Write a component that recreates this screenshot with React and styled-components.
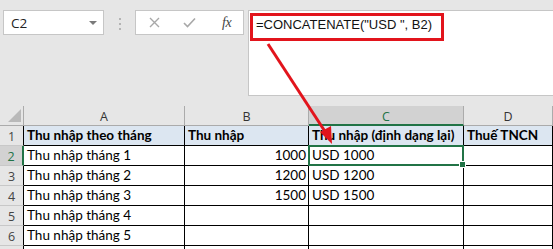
import React from 'react';
import styled, { createGlobalStyle } from 'styled-components';

const GlobalStyle = createGlobalStyle`
  html, body {
    margin: 0;
    padding: 0;
    background: #e6e6e6;
  }
  body {
    font-family: 'Lato', 'Liberation Sans', sans-serif;
  }
`;

const Page = styled.div`
  position: relative;
  width: 553px;
  height: 249px;
  overflow: hidden;
  background: #e6e6e6;
`;

const TopBar = styled.div`
  display: flex;
  align-items: flex-start;
  height: 96px;
  padding: 10px 0 0 3px;
  box-sizing: border-box;
`;

const NameBox = styled.div`
  display: flex;
  align-items: center;
  justify-content: space-between;
  width: 101px;
  height: 25px;
  box-sizing: border-box;
  padding: 0 6px 0 7px;
  background: #fff;
  border: 1px solid #c6c6c6;
  font-family: 'Open Sans', 'Liberation Sans', sans-serif;
  font-size: 13.5px;
  color: #222;
`;

const Caret = styled.span`
  width: 0;
  height: 0;
  border-left: 4px solid transparent;
  border-right: 4px solid transparent;
  border-top: 4px solid #7a7a7a;
  margin-top: 1px;
`;

const Grip = styled.div`
  display: flex;
  flex-direction: column;
  align-items: center;
  gap: 3px;
  width: 31px;
  padding-top: 8px;
`;

const Dot = styled.span`
  width: 2px;
  height: 2px;
  background: #b4b4b4;
`;

const FxBox = styled.div`
  display: flex;
  align-items: center;
  width: 109px;
  height: 25px;
  box-sizing: border-box;
  padding: 0 0 0 13px;
  gap: 23px;
  background: #fff;
  border: 1px solid #c6c6c6;
`;

const FxLabel = styled.span`
  font-family: 'Liberation Serif', serif;
  font-style: italic;
  font-size: 14px;
  color: #444;
  letter-spacing: -0.5px;
  margin-left: 3px;
`;

const FormulaBar = styled.div`
  flex: 1;
  height: 86px;
  margin-left: 4px;
  box-sizing: border-box;
  padding: 6px 0 0 7px;
  background: #fff;
  border: 1px solid #c6c6c6;
  border-right: none;
  font-family: 'Liberation Sans', sans-serif;
  font-size: 13px;
  color: #111;
  white-space: pre;
`;

const Sheet = styled.div`
  display: grid;
  grid-template-columns: 24px 161px 124px 155px 1fr;
  grid-auto-rows: 20px;
  margin-top: 10px;
`;

const Corner = styled.div`
  display: flex;
  align-items: flex-end;
  justify-content: flex-end;
  padding: 0 2px 3px 0;
  box-sizing: border-box;
  background: #e6e6e6;
  border-right: 1px solid #ababab;
  border-bottom: 1px solid #ababab;
`;

const CornerMark = styled.span`
  width: 0;
  height: 0;
  border-left: 13px solid transparent;
  border-bottom: 13px solid #b9b9b9;
`;

const ColHead = styled.div`
  display: flex;
  align-items: center;
  justify-content: center;
  box-sizing: border-box;
  background: ${(p) => (p.$active ? '#d2d2d2' : '#e6e6e6')};
  color: ${(p) => (p.$active ? '#217346' : '#333')};
  border-right: 1px solid #ababab;
  border-bottom: ${(p) => (p.$active ? '2px solid #217346' : '1px solid #ababab')};
  font-family: 'Open Sans', 'Liberation Sans', sans-serif;
  font-size: 12.5px;
  padding-top: 2px;
`;

const RowHead = styled.div`
  display: flex;
  align-items: center;
  justify-content: center;
  box-sizing: border-box;
  background: ${(p) => (p.$active ? '#d2d2d2' : '#e6e6e6')};
  color: ${(p) => (p.$active ? '#217346' : '#444')};
  border-right: ${(p) => (p.$active ? '2px solid #217346' : '1px solid #000')};
  border-bottom: 1px solid #c8c8c8;
  font-family: 'Open Sans', 'Liberation Sans', sans-serif;
  font-size: 12.5px;
  padding-top: 1px;
`;

const Cell = styled.div`
  position: relative;
  display: flex;
  align-items: flex-end;
  justify-content: ${(p) => (p.$right ? 'flex-end' : 'flex-start')};
  box-sizing: border-box;
  padding: 0 2px 1px 3px;
  background: ${(p) => (p.$head ? '#dce6f1' : '#fff')};
  border-right: 1px solid #000;
  border-bottom: 1px solid #000;
  font-size: 13.5px;
  font-weight: ${(p) => (p.$head ? 700 : 400)};
  color: #000;
  white-space: nowrap;
  line-height: 18px;
  z-index: ${(p) => (p.$selected ? 2 : 'auto')};

  ${(p) =>
    p.$selected &&
    `
    &::after {
      content: '';
      position: absolute;
      top: -1px;
      left: -1px;
      right: -1px;
      bottom: -1px;
      border: 2px solid #217346;
    }
    &::before {
      content: '';
      position: absolute;
      right: -3px;
      bottom: -3px;
      width: 5px;
      height: 5px;
      background: #217346;
      border: 1px solid #fff;
      z-index: 3;
    }
  `}
`;

const RedBox = styled.div`
  position: absolute;
  left: 250px;
  top: 13px;
  width: 194px;
  height: 28px;
  box-sizing: border-box;
  border: 3px solid #e2141c;
  pointer-events: none;
`;

const Arrow = styled.svg`
  position: absolute;
  left: 0;
  top: 0;
  pointer-events: none;
  z-index: 5;
`;

const rows = [
  { n: 1, a: 'Thu nhập theo tháng', b: 'Thu nhập', c: 'Thu nhập (định dạng lại)', d: 'Thuế TNCN', head: true },
  { n: 2, a: 'Thu nhập tháng 1', b: '1000', c: 'USD 1000' },
  { n: 3, a: 'Thu nhập tháng 2', b: '1200', c: 'USD 1200' },
  { n: 4, a: 'Thu nhập tháng 3', b: '1500', c: 'USD 1500' },
  { n: 5, a: 'Thu nhập tháng 4', b: '', c: '' },
  { n: 6, a: 'Thu nhập tháng 5', b: '', c: '' },
  { n: 7, a: '', b: '', c: '', hideNum: true },
];

const App = () => {
  return (
    <Page>
      <GlobalStyle />
      <TopBar>
        <NameBox>
          <span>C2</span>
          <Caret />
        </NameBox>
        <Grip>
          <Dot />
          <Dot />
          <Dot />
        </Grip>
        <FxBox>
          <svg width="11" height="11" viewBox="0 0 11 11">
            <path d="M1 1L10 10M10 1L1 10" stroke="#a8a8a8" strokeWidth="1.4" />
          </svg>
          <svg width="13" height="11" viewBox="0 0 13 11">
            <path d="M1 6L4.5 9.5L12 1.5" stroke="#a8a8a8" strokeWidth="1.6" fill="none" />
          </svg>
          <FxLabel>fx</FxLabel>
        </FxBox>
        <FormulaBar>=CONCATENATE("USD ", B2)</FormulaBar>
      </TopBar>

      <Sheet>
        <Corner>
          <CornerMark />
        </Corner>
        <ColHead>A</ColHead>
        <ColHead>B</ColHead>
        <ColHead $active>C</ColHead>
        <ColHead>D</ColHead>

        {rows.map((r) => (
          <React.Fragment key={r.n}>
            <RowHead $active={r.n === 2}>{r.hideNum ? '' : r.n}</RowHead>
            <Cell $head={r.head}>{r.a}</Cell>
            <Cell $head={r.head} $right={!r.head}>{r.b}</Cell>
            <Cell $head={r.head} $selected={r.n === 2}>{r.c}</Cell>
            <Cell $head={r.head}>{r.d || ''}</Cell>
          </React.Fragment>
        ))}
      </Sheet>

      <RedBox />
      <Arrow width="553" height="249" viewBox="0 0 553 249">
        <line x1="268" y1="44" x2="326" y2="133" stroke="#e2141c" strokeWidth="3" />
        <polygon points="332,144 320,132 331,126" fill="#e2141c" />
      </Arrow>
    </Page>
  );
};

export default App;
